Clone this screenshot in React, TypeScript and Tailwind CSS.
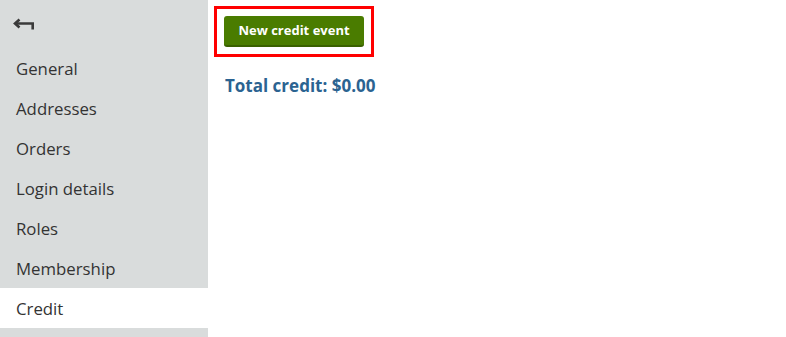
import React from "react";

const items = ["General", "Addresses", "Orders", "Login details", "Roles", "Membership", "Credit"];

export default function App() {
  return (
    <div className="flex h-[337px] w-[786px] bg-white overflow-hidden" style={{ fontFamily: '"Open Sans", "Noto Sans", sans-serif' }}>
      <div className="w-[208px] shrink-0 bg-[#d9dcdc] flex flex-col">
        <div className="h-[48px] flex items-center pl-[13px] pt-[1px]">
          <svg width="22" height="13" viewBox="0 0 22 13" fill="none">
            <path d="M6.5 1.5 L2 5.5 L6.5 9.5" stroke="#3a3a3a" strokeWidth="2.6" strokeLinejoin="miter" fill="none" />
            <path d="M2 5.5 H19.7 V11.5" stroke="#3a3a3a" strokeWidth="2.6" fill="none" />
          </svg>
        </div>
        {items.map((it) => (
          <div
            key={it}
            className={`h-[40px] flex items-center pl-4 pt-[2px] text-[16.8px] text-[#333] ${it === "Credit" ? "bg-white" : ""}`}
          >
            {it}
          </div>
        ))}
      </div>
      <div className="flex flex-col pl-[6px] pt-[6px]">
        <div className="w-[160px] h-[51px] border-[3px] border-[#ff0000] flex items-center justify-center">
          <button className="w-[140px] h-[31px] rounded-[3px] bg-[#4a7c00] border-b-2 border-[#3a6100] text-white font-bold text-[13px] flex items-center justify-center">
            New credit event
          </button>
        </div>
        <div className="pl-[11px] mt-[16px] text-[17px] font-bold text-[#2b6391]">Total credit: $0.00</div>
      </div>
    </div>
  );
}
